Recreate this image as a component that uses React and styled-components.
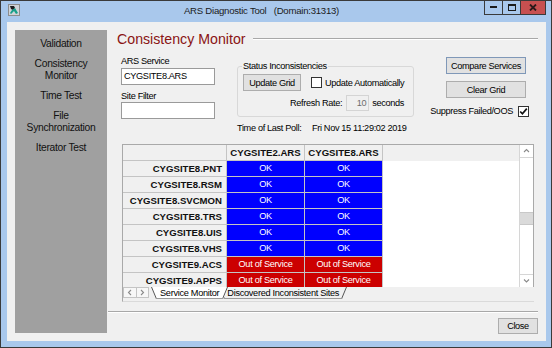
import React from "react";
import styled, { createGlobalStyle } from "styled-components";

const SANS = `"Liberation Sans", Arial, sans-serif`;

const Global = createGlobalStyle`
  *, *::before, *::after { box-sizing: border-box; }
  html, body { margin: 0; padding: 0; }
  body { background: #a9c8ec; font-family: ${SANS}; color: #000; }
`;

const Window = styled.div`
  width: 552px;
  height: 348px;
  border: 1px solid #3a3a3a;
  background: #a9c8ec;
  display: flex;
  flex-direction: column;
  padding: 0 5px 6px 6px;
`;

const TitleBar = styled.div`
  height: 21px;
  flex: none;
  display: flex;
  align-items: flex-start;
`;

const AppIcon = styled.svg`
  margin: 3px 0 0 1px;
  flex: none;
`;

const Title = styled.div`
  flex: 1;
  text-align: center;
  padding-left: 19px;
  font: 9.6px/20px ${SANS};
  letter-spacing: -0.25px;
  color: #1b1b1b;
  white-space: pre;
`;

const WinButtons = styled.div`
  display: flex;
  height: 14px;
  border: 1px solid #3a3a3a;
  border-top: none;
`;

const WinButton = styled.div`
  width: ${(p) => p.$w}px;
  height: 100%;
  display: flex;
  align-items: center;
  justify-content: center;
  background: ${(p) => (p.$close ? "#c75050" : "transparent")};
  border-left: ${(p) => (p.$first ? "none" : "1px solid #3a3a3a")};
`;

const Client = styled.div`
  flex: 1;
  display: flex;
  background: #f0f0f0;
  min-height: 0;
`;

const Sidebar = styled.div`
  width: 92px;
  margin: 8px 0 8px 8px;
  background: #a0a0a0;
  display: flex;
  flex-direction: column;
  align-items: center;
  padding-top: 8px;
  gap: 8px;
`;

const NavItem = styled.div`
  font: 10.3px/12px ${SANS};
  letter-spacing: -0.3px;
  text-align: center;
  color: #111;
`;

const Main = styled.div`
  flex: 1;
  display: flex;
  flex-direction: column;
  padding: 9px 8px 7px 1px;
  min-width: 0;
`;

const HeadingRow = styled.div`
  display: flex;
  align-items: center;
  height: 16px;
  margin-left: 9px;
`;

const Heading = styled.div`
  font: 14.2px/16px ${SANS};
  color: #8a1414;
  white-space: nowrap;
`;

const HeadingRule = styled.div`
  flex: 1;
  margin: 0 0 0 7px;
  border-top: 1px solid #a8a8a8;
  border-bottom: 1px solid #ffffff;
`;

const Controls = styled.div`
  display: flex;
  height: 80px;
  margin: 8px 0 0 13px;
  font: 9.2px/12px ${SANS};
  letter-spacing: -0.35px;
`;

const FieldCol = styled.div`
  width: 94px;
  display: flex;
  flex-direction: column;
`;

const Label = styled.div`
  height: 12px;
  margin-top: ${(p) => p.$mt || 0}px;
  white-space: nowrap;
`;

const TextBox = styled.div`
  width: 94px;
  height: 17px;
  margin-top: ${(p) => p.$mt || 0}px;
  border: 1px solid #9a9a9a;
  background: #fff;
  padding: 0 2px;
  line-height: 15px;
  white-space: nowrap;
`;

const GroupCol = styled.div`
  width: 177px;
  margin-left: 22px;
  display: flex;
  flex-direction: column;
`;

const Group = styled.fieldset`
  margin: 5px 0 0 0;
  padding: 0 5px 5px 5px;
  border: 1px solid #d8d8d8;
  border-radius: 3px;
  min-width: 0;
`;

const Legend = styled.legend`
  padding: 0 1px;
  margin-left: -1px;
  font: inherit;
  line-height: 12px;
`;

const GroupRow = styled.div`
  display: flex;
  align-items: center;
  height: ${(p) => p.$h}px;
  margin-top: ${(p) => p.$mt}px;
  justify-content: ${(p) => (p.$end ? "flex-end" : "flex-start")};
  padding-right: ${(p) => (p.$end ? 4 : 0)}px;
  white-space: nowrap;
`;

const Button = styled.div`
  width: ${(p) => p.$w}px;
  height: ${(p) => p.$h || 17}px;
  margin-top: ${(p) => p.$mt || 0}px;
  margin-right: ${(p) => p.$mr || 0}px;
  flex: none;
  background: #e1e1e1;
  border: 1px solid ${(p) => (p.$default ? "#7f98b8" : "#adadad")};
  display: flex;
  align-items: center;
  justify-content: center;
  font: 9.2px/12px ${SANS};
  letter-spacing: -0.35px;
  color: #000;
  white-space: nowrap;
`;

const CheckBox = styled.span`
  width: 11px;
  height: 11px;
  flex: none;
  margin-left: ${(p) => p.$ml || 0}px;
  margin-right: ${(p) => p.$mr || 0}px;
  border: 1px solid #333;
  background: #fff;
  display: flex;
  align-items: center;
  justify-content: center;
`;

const SpinBox = styled.div`
  width: 23px;
  height: 16px;
  margin: 0 3px 0 4px;
  border: 1px solid #d4d4d4;
  background: #f0f0f0;
  color: #6d6d6d;
  text-align: right;
  padding-right: 2px;
  line-height: 14px;
`;

const TimeRow = styled.div`
  display: flex;
  margin-top: 5px;
  white-space: nowrap;
`;

const TimeLabel = styled.span`
  width: 75px;
  flex: none;
`;

const RightCol = styled.div`
  width: 95px;
  margin-left: 20px;
  display: flex;
  flex-direction: column;
  align-items: flex-end;
`;

const SuppressRow = styled.div`
  display: flex;
  align-items: center;
  margin-top: 7px;
  gap: 5px;
  white-space: nowrap;
`;

const GridPanel = styled.div`
  width: 412px;
  height: 158px;
  margin: 9px 0 0 14px;
  display: flex;
  flex-direction: column;
  flex: none;
`;

const GridBox = styled.div`
  height: 143px;
  border: 1px solid #a9a9a9;
  border-bottom: none;
  background: #fff;
  display: flex;
`;

const GridContent = styled.div`
  flex: 1;
  overflow: hidden;
  display: flex;
  flex-direction: column;
`;

const GridRow = styled.div`
  display: flex;
  height: 16px;
  flex: none;
  background: ${(p) => (p.$header ? "#f0f0f0" : "transparent")};
`;

const Cell = styled.div`
  width: ${(p) => p.$w}px;
  flex: none;
  height: 16px;
  border-right: 1px solid #c4c4c4;
  border-bottom: 1px solid #c4c4c4;
  display: flex;
  align-items: center;
  justify-content: ${(p) => (p.$right ? "flex-end" : "center")};
  padding-right: ${(p) => (p.$right ? 4 : 0)}px;
  background: ${(p) => p.$bg || "#f0f0f0"};
  color: ${(p) => p.$fg || "#111"};
  font: ${(p) => (p.$bold ? `bold 9.6px/15px ${SANS}` : `9.2px/15px ${SANS}`)};
  letter-spacing: ${(p) => (p.$bold ? "0" : "-0.3px")};
  white-space: nowrap;
  overflow: hidden;
`;

const Scrollbar = styled.div`
  width: 14px;
  flex: none;
  display: flex;
  flex-direction: column;
  border-left: 1px solid #d6d6d6;
  background: #fff;
`;

const ScrollArrow = styled.div`
  height: 13px;
  flex: none;
  display: flex;
  align-items: center;
  justify-content: center;
  border-${(p) => (p.$down ? "top" : "bottom")}: 1px solid #d6d6d6;
`;

const Track = styled.div`
  flex: 1;
  display: flex;
  flex-direction: column;
`;

const Thumb = styled.div`
  height: 13px;
  background: #dadada;
  border-top: 1px solid #c8c8c8;
  border-bottom: 1px solid #c8c8c8;
`;

const TabBar = styled.div`
  height: 15px;
  flex: none;
  display: flex;
  align-items: flex-start;
  background: #f0f0f0;
  border-left: 1px solid #a9a9a9;
  border-bottom: 1px solid #dadada;
`;

const NavBox = styled.div`
  display: flex;
  height: 11px;
  border: 1px solid #c4c4c4;
  background: #f7f7f7;
  flex: none;
`;

const NavBtn = styled.div`
  width: 12px;
  display: flex;
  align-items: center;
  justify-content: center;
  border-left: ${(p) => (p.$second ? "1px solid #c4c4c4" : "none")};
`;

const Tabs = styled.div`
  display: flex;
  margin-left: 2px;
`;

const Tab = styled.div`
  position: relative;
  height: 12px;
  padding: 0 ${(p) => (p.$active ? 9 : 8)}px;
  margin-left: ${(p) => (p.$overlap ? -9 : 0)}px;
  z-index: ${(p) => (p.$active ? 2 : 1)};
  font: 9.2px/12px ${SANS};
  letter-spacing: -0.3px;
  color: #000;
  white-space: nowrap;
  &::before {
    content: "";
    position: absolute;
    inset: 0;
    background: ${(p) => (p.$active ? "#ffffff" : "#f0f0f0")};
    clip-path: polygon(0 0, 100% 0, calc(100% - 5px) 100%, 5px 100%);
  }
`;

const TabText = styled.span`
  position: relative;
`;

const Slant = styled.svg`
  position: absolute;
  top: 0;
  ${(p) => (p.$right ? "right: 0;" : "left: 0;")}
`;

const TabBottom = styled.div`
  position: absolute;
  left: 5px;
  right: 5px;
  bottom: 0;
  border-bottom: 1px solid #9a9a9a;
`;

const Separator = styled.div`
  margin-top: 9px;
  height: 2px;
  flex: none;
  border-top: 1px solid #a8a8a8;
  border-bottom: 1px solid #ffffff;
`;

const Footer = styled.div`
  display: flex;
  justify-content: flex-end;
  margin-top: 5px;
`;

const Chevron = ({ dir }) => {
  const pts = {
    up: "1,4 3.5,1.5 6,4",
    down: "1,1.5 3.5,4 6,1.5",
    left: "4,1 1.5,3.5 4,6",
    right: "2,1 4.5,3.5 2,6",
  }[dir];
  return (
    <svg width="7" height="7" viewBox="0 0 7 7">
      <polyline points={pts} fill="none" stroke="#8a8a8a" strokeWidth="1.1" />
    </svg>
  );
};

const Check = () => (
  <svg width="9" height="9" viewBox="0 0 9 9">
    <polyline points="1.2,4.5 3.4,6.8 7.8,1.6" fill="none" stroke="#111" strokeWidth="1.7" />
  </svg>
);

const SheetTab = ({ active, overlap, children }) => (
  <Tab $active={active} $overlap={overlap}>
    <Slant width="6" height="12" viewBox="0 0 6 12">
      <line x1="0.5" y1="0" x2="5.5" y2="12" stroke="#555" strokeWidth="1" />
    </Slant>
    <Slant $right width="6" height="12" viewBox="0 0 6 12">
      <line x1="5.5" y1="0" x2="0.5" y2="12" stroke="#555" strokeWidth="1" />
    </Slant>
    <TabBottom />
    <TabText>{children}</TabText>
  </Tab>
);

const rows = [
  ["CYGSITE8.PNT", "ok"],
  ["CYGSITE8.RSM", "ok"],
  ["CYGSITE8.SVCMON", "ok"],
  ["CYGSITE8.TRS", "ok"],
  ["CYGSITE8.UIS", "ok"],
  ["CYGSITE8.VHS", "ok"],
  ["CYGSITE9.ACS", "oos"],
  ["CYGSITE9.APPS", "oos"],
];

const statusStyle = {
  ok: { bg: "#0000ff", text: "OK" },
  oos: { bg: "#cc0000", text: "Out of Service" },
};

export default function App() {
  return (
    <>
      <Global />
      <Window>
        <TitleBar>
          <AppIcon width="12" height="12" viewBox="0 0 12 12">
            <rect x="0.5" y="0.5" width="11" height="11" fill="#cfd3d8" stroke="#8c8c8c" />
            <path d="M2 2 L6 2 L7 4 L5 6 L3 5 Z" fill="#1d1d1d" />
            <path d="M4 6 L7 4 L10 9 L8 10 L6 7 L3 10 L2 9 Z" fill="#17a08a" />
          </AppIcon>
          <Title>{"ARS Diagnostic Tool   (Domain:31313)"}</Title>
          <WinButtons>
            <WinButton $w={17} $first>
              <svg width="7" height="3" viewBox="0 0 7 3">
                <rect x="0" y="0" width="7" height="2" fill="#1b1b1b" />
              </svg>
            </WinButton>
            <WinButton $w={18}>
              <svg width="8" height="7" viewBox="0 0 8 7">
                <rect x="0.5" y="0.5" width="7" height="6" fill="none" stroke="#1b1b1b" />
                <rect x="0" y="0" width="8" height="2" fill="#1b1b1b" />
              </svg>
            </WinButton>
            <WinButton $w={25} $close>
              <svg width="8" height="7" viewBox="0 0 8 7">
                <path d="M1 0.5 L7 6.5 M7 0.5 L1 6.5" stroke="#2a1a1a" strokeWidth="1.8" />
              </svg>
            </WinButton>
          </WinButtons>
        </TitleBar>
        <Client>
          <Sidebar>
            <NavItem>Validation</NavItem>
            <NavItem>
              Consistency
              <br />
              Monitor
            </NavItem>
            <NavItem>Time Test</NavItem>
            <NavItem>
              File
              <br />
              Synchronization
            </NavItem>
            <NavItem>Iterator Test</NavItem>
          </Sidebar>
          <Main>
            <HeadingRow>
              <Heading>Consistency Monitor</Heading>
              <HeadingRule />
            </HeadingRow>
            <Controls>
              <FieldCol>
                <Label>ARS Service</Label>
                <TextBox $mt={1}>CYGSITE8.ARS</TextBox>
                <Label $mt={5}>Site Filter</Label>
                <TextBox />
              </FieldCol>
              <GroupCol>
                <Group>
                  <Legend>Status Inconsistencies</Legend>
                  <GroupRow $h={17} $mt={2}>
                    <Button $w={58}>Update Grid</Button>
                    <CheckBox $ml={10} $mr={3} />
                    <span>Update Automatically</span>
                  </GroupRow>
                  <GroupRow $h={16} $mt={4} $end>
                    <span>Refresh Rate:</span>
                    <SpinBox>10</SpinBox>
                    <span>seconds</span>
                  </GroupRow>
                </Group>
                <TimeRow>
                  <TimeLabel>Time of Last Poll:</TimeLabel>
                  <span>Fri Nov 15 11:29:02 2019</span>
                </TimeRow>
              </GroupCol>
              <RightCol>
                <Button $w={80} $mt={2} $mr={3} $default>
                  Compare Services
                </Button>
                <Button $w={80} $mt={7} $mr={3}>
                  Clear Grid
                </Button>
                <SuppressRow>
                  <span>Suppress Failed/OOS</span>
                  <CheckBox>
                    <Check />
                  </CheckBox>
                </SuppressRow>
              </RightCol>
            </Controls>
            <GridPanel>
              <GridBox>
                <GridContent>
                  <GridRow $header>
                    <Cell $w={104} />
                    <Cell $w={78} $bold>CYGSITE2.ARS</Cell>
                    <Cell $w={78} $bold>CYGSITE8.ARS</Cell>
                  </GridRow>
                  {rows.map(([name, st]) => (
                    <GridRow key={name}>
                      <Cell $w={104} $bold $right>
                        {name}
                      </Cell>
                      <Cell $w={78} $bg={statusStyle[st].bg} $fg="#ffffff">
                        {statusStyle[st].text}
                      </Cell>
                      <Cell $w={78} $bg={statusStyle[st].bg} $fg="#ffffff">
                        {statusStyle[st].text}
                      </Cell>
                    </GridRow>
                  ))}
                </GridContent>
                <Scrollbar>
                  <ScrollArrow>
                    <Chevron dir="up" />
                  </ScrollArrow>
                  <Track>
                    <Thumb style={{ marginTop: 54 }} />
                  </Track>
                  <ScrollArrow $down>
                    <Chevron dir="down" />
                  </ScrollArrow>
                </Scrollbar>
              </GridBox>
              <TabBar>
                <NavBox>
                  <NavBtn>
                    <Chevron dir="left" />
                  </NavBtn>
                  <NavBtn $second>
                    <Chevron dir="right" />
                  </NavBtn>
                </NavBox>
                <Tabs>
                  <SheetTab active>Service Monitor</SheetTab>
                  <SheetTab overlap>Discovered Inconsistent Sites</SheetTab>
                </Tabs>
              </TabBar>
            </GridPanel>
            <Separator />
            <Footer>
              <Button $w={40} $h={16}>
                Close
              </Button>
            </Footer>
          </Main>
        </Client>
      </Window>
    </>
  );
}
